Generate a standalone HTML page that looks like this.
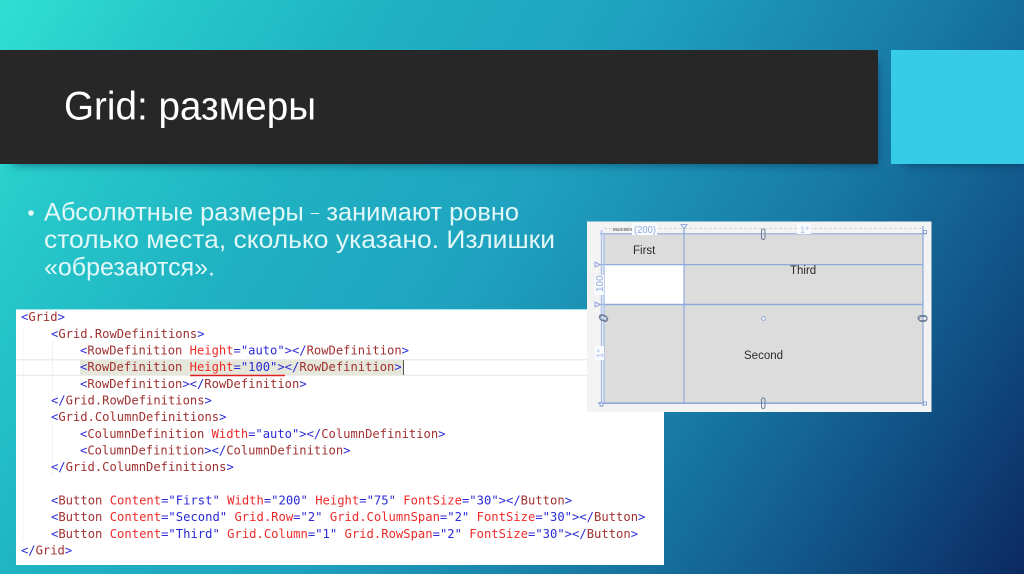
<!DOCTYPE html>
<html><head><meta charset="utf-8"><style>
html,body{margin:0;padding:0;width:1024px;height:574px;overflow:hidden}
body{position:relative;background:linear-gradient(122.3deg,#2fe0d2 0%,#27c9cb 12%,#1fb2c2 28%,#1fa3c0 46%,#187ba6 68%,#125a8c 82%,#0b2a62 100%)}
.a{position:absolute}
svg{position:absolute;left:0;top:0}
.c{font-family:"DejaVu Sans Mono",monospace;font-size:12.15px;fill:#a03030}
.d{font-size:12.19px}
.b{fill:#2a2ad6}.r{fill:#ee2b2b}.k{fill:#a03030}
.u{font-family:"Liberation Sans",sans-serif;fill:#333}
</style></head><body>
<div class="a" style="left:0;top:49.5px;width:878px;height:114.5px;background:#272727;box-shadow:6px 7px 9px -7px rgba(0,30,60,.6)"></div>
<div class="a" style="left:891px;top:49.5px;width:133px;height:114.5px;background:#36cbe7;box-shadow:6px 7px 9px -7px rgba(0,30,60,.6)"></div>
<svg width="1024" height="574" viewBox="0 0 1024 574">
<defs><filter id="s" x="-2%" y="-2%" width="104%" height="104%"><feGaussianBlur stdDeviation="0.35"/></filter></defs>
<text x="64" y="119.5" font-family="Liberation Sans,sans-serif" font-size="40" fill="#fff" textLength="252" lengthAdjust="spacingAndGlyphs">Grid: размеры</text>
<g font-family="Liberation Sans,sans-serif" font-size="25" fill="#e2f8f8">
<circle cx="31" cy="213" r="2.8" fill="#e2f8f8"/>
<text x="44" y="220.5" textLength="475" lengthAdjust="spacingAndGlyphs">Абсолютные размеры <tspan font-size="15" dy="-3">–</tspan><tspan dy="3"> занимают ровно</tspan></text>
<text x="44" y="248" textLength="511" lengthAdjust="spacingAndGlyphs">столько места, сколько указано. Излишки</text>
<text x="44" y="275.5" textLength="171" lengthAdjust="spacingAndGlyphs">«обрезаются».</text>
</g>
<rect x="16" y="309" width="648" height="256" fill="#fff"/>
<rect x="16" y="309" width="648" height="1" fill="#9fe6ee"/>
<g filter="url(#s)">
<rect x="16" y="359" width="572" height="1.4" fill="#ececec"/>
<rect x="16" y="374.6" width="572" height="1.4" fill="#ececec"/>
<rect x="80" y="360" width="323" height="15" fill="#e5e7da"/>
<path d="M52.5 342V392M52.5 425V475" stroke="#ddd" stroke-width="1" stroke-dasharray="1 1.5" fill="none"/>
<path d="M23.5 326V540" stroke="#eee" stroke-width="1" stroke-dasharray="1 1.5" fill="none"/>
<rect x="403" y="360" width="1" height="15" fill="#555"/>
<path d="M190 375.5H285" stroke="#e02020" stroke-width="1.4" fill="none"/>
<g class="c">
<text x="21" y="321"><tspan class="b">&lt;</tspan>Grid<tspan class="b">&gt;</tspan></text>
<text x="51" y="338"><tspan class="b">&lt;</tspan>Grid.RowDefinitions<tspan class="b">&gt;</tspan></text>
<text x="80" y="354.5"><tspan class="b">&lt;</tspan>RowDefinition <tspan class="r">Height</tspan><tspan class="b">="auto"&gt;&lt;/</tspan>RowDefinition<tspan class="b">&gt;</tspan></text>
<text x="80" y="371"><tspan class="b">&lt;</tspan>RowDefinition <tspan class="r">Height</tspan><tspan class="b">="100"&gt;&lt;/</tspan>RowDefinition<tspan class="b">&gt;</tspan></text>
<text x="80" y="388"><tspan class="b">&lt;</tspan>RowDefinition<tspan class="b">&gt;&lt;/</tspan>RowDefinition<tspan class="b">&gt;</tspan></text>
<text x="51" y="404.5"><tspan class="b">&lt;/</tspan>Grid.RowDefinitions<tspan class="b">&gt;</tspan></text>
<text x="51" y="421"><tspan class="b">&lt;</tspan>Grid.ColumnDefinitions<tspan class="b">&gt;</tspan></text>
<text x="80" y="438"><tspan class="b">&lt;</tspan>ColumnDefinition <tspan class="r">Width</tspan><tspan class="b">="auto"&gt;&lt;/</tspan>ColumnDefinition<tspan class="b">&gt;</tspan></text>
<text x="80" y="454.5"><tspan class="b">&lt;</tspan>ColumnDefinition<tspan class="b">&gt;&lt;/</tspan>ColumnDefinition<tspan class="b">&gt;</tspan></text>
<text x="51" y="471"><tspan class="b">&lt;/</tspan>Grid.ColumnDefinitions<tspan class="b">&gt;</tspan></text>
<text class="d" x="51" y="504.5"><tspan class="b">&lt;</tspan>Button <tspan class="r">Content</tspan><tspan class="b">="First" </tspan><tspan class="r">Width</tspan><tspan class="b">="200" </tspan><tspan class="r">Height</tspan><tspan class="b">="75" </tspan><tspan class="r">FontSize</tspan><tspan class="b">="30"&gt;&lt;/</tspan>Button<tspan class="b">&gt;</tspan></text>
<text class="d" x="51" y="521"><tspan class="b">&lt;</tspan>Button <tspan class="r">Content</tspan><tspan class="b">="Second" </tspan><tspan class="r">Grid.Row</tspan><tspan class="b">="2" </tspan><tspan class="r">Grid.ColumnSpan</tspan><tspan class="b">="2" </tspan><tspan class="r">FontSize</tspan><tspan class="b">="30"&gt;&lt;/</tspan>Button<tspan class="b">&gt;</tspan></text>
<text class="d" x="51" y="538"><tspan class="b">&lt;</tspan>Button <tspan class="r">Content</tspan><tspan class="b">="Third" </tspan><tspan class="r">Grid.Column</tspan><tspan class="b">="1" </tspan><tspan class="r">Grid.RowSpan</tspan><tspan class="b">="2" </tspan><tspan class="r">FontSize</tspan><tspan class="b">="30"&gt;&lt;/</tspan>Button<tspan class="b">&gt;</tspan></text>
<text x="21" y="554.5"><tspan class="b">&lt;/</tspan>Grid<tspan class="b">&gt;</tspan></text>
</g>
</g>
<g filter="url(#s)">
<rect x="587" y="221.5" width="344.5" height="190.5" fill="#f3f3f3"/>
<rect x="604" y="234" width="319" height="169" fill="#dcdcdc"/>
<rect x="604" y="265" width="80" height="39" fill="#fff"/>
<path d="M600 233.8H926M600 264.6H923M684 228V403M923 226V406" stroke="#8ea9dc" stroke-width="1.2" fill="none"/>
<path d="M598 304.5H923M598 403.2H926" stroke="#8ea9dc" stroke-width="1.6" fill="none"/>
<path d="M601.5 230V407M604 234V403" stroke="#a9bfe6" stroke-width="1.4" fill="none"/>
<path d="M604 228.5H923" stroke="#d4d4d4" stroke-dasharray="3 2" stroke-width="1" fill="none"/>
<rect x="632" y="223" width="25" height="12" fill="#fafbff"/>
<text x="613" y="231" font-size="4.5" class="u" fill="#666" textLength="19">MainWin</text>
<text x="634" y="233" font-family="Liberation Sans,sans-serif" font-size="10.5" fill="#8ea9dc" textLength="22" lengthAdjust="spacingAndGlyphs">(200)</text>
<path d="M681 224.5H687L684 229Z" fill="#eef" stroke="#7f9ad4" stroke-width=".8"/>
<rect x="797" y="223" width="14" height="11" fill="#fafbff"/>
<text x="800" y="233" font-family="Liberation Sans,sans-serif" font-size="9.5" fill="#a9bfe6">1*</text>
<path d="M595 262V267L600 264.6Z M595 302V307L600 304.5Z" fill="#eef" stroke="#7f9ad4" stroke-width=".8"/>
<rect x="595" y="275" width="9" height="20" fill="#fafbff"/>
<text transform="translate(603,292) rotate(-90)" font-family="Liberation Sans,sans-serif" font-size="10" fill="#8ea9dc">100</text>
<rect x="595" y="346" width="9" height="14" fill="#fafbff"/>
<text transform="translate(603,358) rotate(-90)" font-family="Liberation Sans,sans-serif" font-size="9.5" fill="#a9bfe6">1*</text>
<g fill="none" stroke="#6f7f99" stroke-width="1">
<rect x="761.5" y="229" width="3.5" height="10.5" rx="1.7"/>
<rect x="761.5" y="398" width="3.5" height="10.5" rx="1.7"/>
<rect x="599" y="315" width="8" height="5" rx="2.5" transform="rotate(20 603 318)"/>
<rect x="600" y="316" width="8" height="5" rx="2.5" transform="rotate(20 604 318)"/>
<rect x="918" y="315.5" width="9" height="5" rx="2.5"/>
<rect x="919" y="316.5" width="8" height="5" rx="2.5"/>
</g>
<g fill="#fff" stroke="#7f9ad4" stroke-width=".9">
<circle cx="763.5" cy="318.5" r="1.8"/>
<rect x="923.5" y="230.5" width="3" height="3"/>
<rect x="923.5" y="402" width="3" height="3"/>
<rect x="600" y="403" width="3" height="3"/>
</g>
<g font-family="Liberation Sans,sans-serif" fill="#2b2b2b" font-size="11.5">
<text x="633" y="254">First</text>
<text x="790" y="274">Third</text>
<text x="744" y="359">Second</text>
</g>
</g>
</svg>
</body></html>
